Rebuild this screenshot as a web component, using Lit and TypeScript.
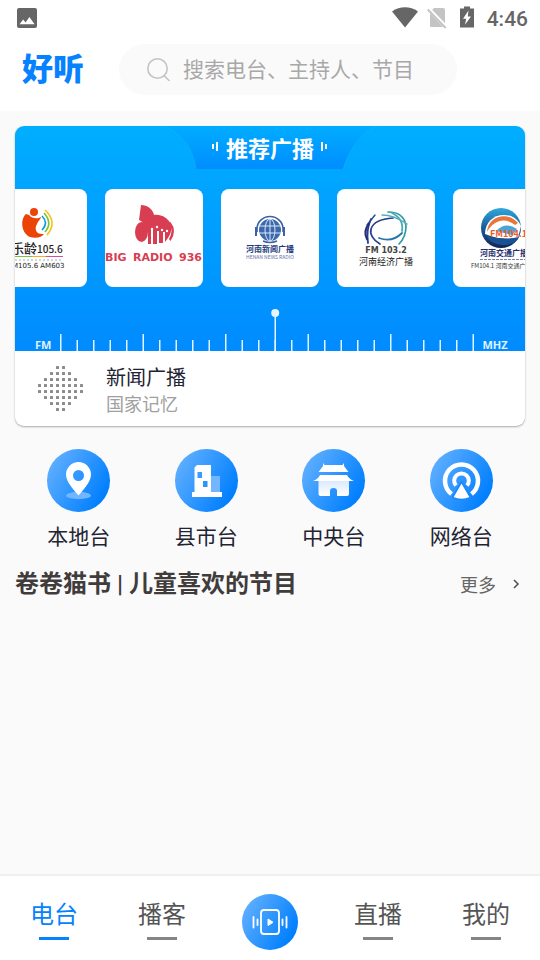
import { LitElement, html, svg, css } from "lit";
import { customElement, property, state } from "lit/decorators.js";
import { classMap } from "lit/directives/class-map.js";

const shared = css`
  *, *::before, *::after { box-sizing: border-box; }
  svg { display: block; }
  svg text { font-family: "Noto Sans CJK SC", sans-serif; }
  button, input { font: inherit; color: inherit; border: 0; padding: 0; margin: 0; background: none; }
  button { cursor: pointer; }
  a { color: inherit; text-decoration: none; }
  h1, h2, p { margin: 0; font: inherit; }
`;

@customElement("status-bar")
export class StatusBar extends LitElement {
  static styles = [shared, css`
    :host { display: flex; align-items: center; height: 36px; padding: 0 12px 0 16px; color: #666; background: #fff; }
    .right { display: flex; align-items: center; gap: 8px; margin-left: auto; }
    .time { font: 500 21px/24px Roboto, sans-serif; padding-top: 2px; }
  `];

  render() {
    return html`
      <svg width="22" height="22" viewBox="0 0 22 22" aria-hidden="true">
        <rect x="1" y="1" width="20" height="20" rx="2" fill="#666" />
        <path d="M3.5 17.3 7.2 12.6l2.4 2.9 3.8-5.4 5.2 7.2z" fill="#fff" />
      </svg>
      <div class="right">
        <svg width="28" height="24" viewBox="0 0 28 24" aria-hidden="true">
          <path d="M1 5.5C9-.1 19-.1 27 5.5L14 21.5z" fill="#666" />
        </svg>
        <svg width="20" height="24" viewBox="0 0 20 24" aria-hidden="true">
          <path d="M7 2h9q2 0 2 2v16q0 1-1 1H4q-1 0-1-1V6z" fill="#c4c4c4" />
          <path d="M1 2.500 19.500 21.500" stroke="#fff" stroke-width="4" />
          <path d="M.7 3.500 18.700 22" stroke="#c4c4c4" stroke-width="2" />
        </svg>
        <svg width="24" height="24" viewBox="0 0 24 24" aria-hidden="true">
          <path d="M9 .5h6v2h4v19H5v-19h4z" fill="#666" />
          <path d="M13.500 4.500 8 12.800h3.200l-1.200 6 6-8.400h-3.200z" fill="#fff" />
        </svg>
        <span class="time">4:46</span>
      </div>
    `;
  }
}

@customElement("search-header")
export class SearchHeader extends LitElement {
  static styles = [shared, css`
    :host { display: flex; align-items: center; gap: 35px; height: 75px; padding: 0 83px 8px 22px; background: #fff; }
    .brand { flex: none; font-weight: 900; font-size: 31px; line-height: 40px; padding-bottom: 6px; color: #0682ff; }
    .box { flex: 1; min-width: 0; height: 51px; display: flex; align-items: center; gap: 12px; padding: 0 16px 0 28px; border-radius: 26px; background: #fafafa; }
    .box svg { flex: none; }
    .field { flex: 1; min-width: 0; height: 36px; padding-bottom: 4px; outline: 0; font-size: 21px; color: #333; }
    .field::placeholder { color: #a8a8a8; opacity: 1; }
  `];

  render() {
    return html`
      <h1 class="brand">好听</h1>
      <label class="box">
        <svg width="24" height="24" viewBox="0 0 24 24" fill="none" stroke="#c4c4c4" stroke-width="1.600" stroke-linecap="round" aria-hidden="true">
          <circle cx="10.500" cy="10.500" r="9.700" /><path d="m17.500 18 4.500 4.500" />
        </svg>
        <input class="field" type="text" aria-label="搜索" placeholder="搜索电台、主持人、节目" />
      </label>
    `;
  }
}

const logos = {
  leling: svg`
    <circle cx="45" cy="23" r="4" fill="#ec4308" />
    <path d="M37 25C31 30 32 44 41 48c6 2 12 0 14-3-8 1-10-5-7-10 1-3 4-5 4-7-3 2-9 2-12-2-1 0-2-1-3-1z" fill="#ec4308" />
    <g fill="none" stroke-width="1.600">
      <path d="M53 27q7 7 0 14" stroke="#0898dc" />
      <path d="M55 24q9 10 1 19" stroke="#78c433" />
      <path d="M56 21q13 12 2 25" stroke="#f6c51d" />
    </g>
    <g font-weight="500" fill="#222"><text x="22" y="64" font-size="13">乐龄</text><text x="48" y="64" font-size="10">105.6</text></g>
    <path d="M26 67.500h17" stroke="#7bc143" /><path d="M43 67.500h14" stroke="#f5ad29" /><path d="M57 67.500h17" stroke="#cf4f9c" />
    <path d="M26 71h48" stroke="#aaa" stroke-dasharray="2 2" />
    <text class="wide" x="19" y="79" font-size="7" fill="#222">FM105.6 AM603</text>`,
  big: svg`
    <g fill="#d83d51">
      <ellipse cx="36.500" cy="43" rx="6.500" ry="10" />
      <path d="M36 16c6 0 12 4 13 10 5-1 11 1 15 6 4 6 2 13-1 17l-3 4V43h-2v11h-4V42h-2v13h-4V40h-2v15h-3V43h-2q-1-10-7-12z" />
      <path d="M64 34q5 8 0 16l1.500 2q7-10 0-19z" />
    </g>
    <g fill="#fff"><circle cx="47" cy="40" r="1.200" /><circle cx="52" cy="38" r="1.200" /><circle cx="57" cy="41" r="1.200" /><circle cx="62" cy="42" r="1.200" /></g>
    <g font-size="11" font-weight="700" fill="#d83d51">
      <text class="wide" x="0" y="72">BIG</text><text class="wide" x="28" y="72">RADIO</text><text class="wide" x="74" y="72">936</text>
    </g>`,
  news: svg`
    <circle cx="49" cy="41" r="11" fill="#3c69ad" />
    <g fill="none" stroke="#dce9f7"><ellipse cx="49" cy="41" rx="5" ry="11" /><path d="M38 37h22M38 44h22M49 30v22" /></g>
    <g fill="none" stroke="#3b60a4">
      <path d="M36 43V40a13 12.500 0 0 1 26 0v3" stroke-width="1.600" /><path d="M35 38v9M63 38v9" stroke-width="2" />
      <path d="M42 52q7 3 14 0" stroke-width="1.500" />
    </g>
    <text x="49" y="63" text-anchor="middle" font-size="8" font-weight="700" fill="#243a7c">河南新闻广播</text>
    <text x="49" y="70" text-anchor="middle" font-size="5" fill="#6473a5">HENAN NEWS RADIO</text>`,
  economy: svg`
    <g fill="none" stroke-linecap="round">
      <path d="M43 55C29 47 29 31 56 29" stroke="#253e91" stroke-width="1.700" />
      <path d="M30 36l8-10" stroke="#2f4f9c" stroke-width="1.500" />
      <path d="M34 30q-5 11-3 24" stroke="#263e94" stroke-width="1.800" />
      <path d="M32 35q-6 7-2 15" stroke="#2d2d7b" stroke-width="2.200" />
      <path d="M42 49q13 5 23-5" stroke="#2475a8" stroke-width="1.800" />
      <path d="M51 23q16 0 18 14 0 11-7 18" stroke="#2f9ba7" stroke-width="1.700" />
      <path d="M55 24q12 6 10 18" stroke="#4fabb2" stroke-width="1.800" />
      <path d="M45 26q12 0 25 9" stroke="#57adb9" stroke-width="1.500" />
    </g>
    <text class="wide" x="49" y="64" text-anchor="middle" font-size="8" font-weight="700" fill="#444">FM 103.2</text>
    <text x="49" y="76" text-anchor="middle" font-size="9" fill="#222">河南经济广播</text>`,
  traffic: svg`
    <defs><linearGradient id="globe" x2="0" y2="1"><stop stop-color="#2fa9dc" /><stop offset=".5" stop-color="#175c9b" /><stop offset="1" stop-color="#152251" /></linearGradient></defs>
    <circle cx="48" cy="39" r="20" fill="url(#globe)" />
    <path d="M32 45C32 31 44 23 58 27q7 3 10 10l-3 12q-16 3-33-4z" fill="#fff" />
    <path d="M34 43C35 27 55 22 65 34l-3 2C52 28 41 31 34 43z" fill="#e8763a" />
    <path d="M43 42q9-10 21-2l-5 6z" fill="#4ba4d5" />
    <path d="M33 46q15 6 33 2-3 8-17 8-12-1-16-10z" fill="#195393" />
    <text x="37" y="48" font-size="9" font-weight="700" fill="#ef5b2a">FM104.1</text>
    <text x="27" y="67" font-size="8" font-weight="700" fill="#252d6d">河南交通广播</text>
    <path d="M27 70.500h50" stroke="#7780ad" stroke-dasharray="3 1" />
    <text x="18" y="79" font-size="6" fill="#333">FM104.1 河南交通广播</text>`,
};

const stations = [
  { name: "乐龄105.6", art: logos.leling },
  { name: "BIG RADIO 936", art: logos.big },
  { name: "河南新闻广播", art: logos.news },
  { name: "河南经济广播", art: logos.economy },
  { name: "河南交通广播", art: logos.traffic },
];

@customElement("radio-card")
export class RadioCard extends LitElement {
  static styles = [shared, css`
    :host { display: block; border-radius: 9px; overflow: hidden; background: #fff; box-shadow: 0 1px 2px rgba(0, 0, 0, .32); }
    .tuner { display: flex; flex-direction: column; height: 225px; background: linear-gradient(#00aeff, #008bff); }
    .crest { position: relative; align-self: center; width: 214px; height: 43px; display: flex; align-items: center; justify-content: center; gap: 6px; padding-bottom: 2px; color: #fff; }
    .shape { position: absolute; inset: 0; }
    .crest h2 { position: relative; font-weight: 700; font-size: 22px; line-height: 30px; }
    .wave { position: relative; }
    .stations { display: flex; justify-content: center; gap: 18px; margin-top: 20px; overflow: hidden; }
    .station { flex: none; width: 98px; height: 98px; border-radius: 8px; overflow: hidden; background: #fff; }
    .station .wide { font-family: "DejaVu Sans", sans-serif; }
    .dial { display: flex; justify-content: center; align-items: flex-end; gap: 8px; margin-top: auto; color: #e0f1ff; }
    .dial svg { flex: none; }
    .dial span { font: 700 11px/12px "Noto Sans", sans-serif; }
    .low { width: 20px; text-align: right; }
    .high { width: 26px; }
    .now { display: flex; align-items: center; gap: 22px; width: 100%; height: 75px; padding: 0 22px; text-align: left; }
    .name, .show { display: block; }
    .name { font-size: 20px; line-height: 28px; color: #1f2433; }
    .show { font-size: 18px; line-height: 24px; color: #a0a0a0; }
  `];

  private ticks() {
    return Array.from({ length: 26 }, (_, i) => svg`
      <rect x=${i * 16.5} y=${i % 5 ? 32 : 26} width="1.500" height="18" />`);
  }

  private dots() {
    return [2, 4, 6, 8, 8, 6, 4, 2].flatMap((count, row) =>
      Array.from({ length: count }, (_, i) => svg`
        <rect x=${1 + (4 - count / 2 + i) * 6} y=${1 + row * 6} width="3" height="3" rx=".5" />`));
  }

  render() {
    return html`
      <div class="tuner">
        <div class="crest">
          <svg class="shape" width="214" height="43" viewBox="0 0 214 43" aria-hidden="true">
            <defs><linearGradient id="crest" x2="0" y2="1"><stop stop-color="#00adff" /><stop offset="1" stop-color="#008dff" /></linearGradient></defs>
            <path d="M0 0Q28 10 33 43H180Q190 11 214 0z" fill="url(#crest)" />
            <path d="M0 0Q28 10 33 43M180 43Q190 11 214 0" fill="none" stroke="#08bcff" stroke-opacity=".5" />
          </svg>
          <svg class="wave" width="8" height="12" viewBox="0 0 8 12" fill="#fff" aria-hidden="true"><rect y="3" width="2" height="5" /><rect x="4" y="1" width="2" height="9" /></svg>
          <h2>推荐广播</h2>
          <svg class="wave" width="8" height="12" viewBox="0 0 8 12" fill="#fff" aria-hidden="true"><rect x="1" y="1" width="2" height="9" /><rect x="5" y="3" width="2" height="5" /></svg>
        </div>
        <div class="stations">
          ${stations.map((s) => html`
            <a class="station" href="#station" aria-label=${s.name}>
              <svg width="98" height="98" viewBox="0 0 98 98">${s.art}</svg>
            </a>`)}
        </div>
        <div class="dial">
          <span class="low">FM</span>
          <svg width="415" height="43" viewBox="0 0 415 43" fill="#e6f4ff" aria-hidden="true">
            ${this.ticks()}
            <rect x="214.500" y="5" width="1.500" height="38" /><circle cx="215.200" cy="5" r="4" />
          </svg>
          <span class="high">MHZ</span>
        </div>
      </div>
      <button class="now" type="button">
        <svg width="47" height="47" viewBox="0 0 47 47" fill="#8d8d8d" aria-hidden="true">${this.dots()}</svg>
        <span>
          <span class="name">新闻广播</span>
          <span class="show">国家记忆</span>
        </span>
      </button>
    `;
  }
}

const categories = [
  {
    label: "本地台",
    art: svg`
      <ellipse cx="31.500" cy="46.500" rx="12.500" ry="3.700" fill="#71b6ff" />
      <path fill-rule="evenodd" fill="#fff" d="M31.500 46.500C28 42 19 33.500 19 25.500a12.500 12.500 0 0 1 25 0C44 33.500 35 42 31.500 46.500zM31.500 21a5.500 5.500 0 1 0 0 11 5.500 5.500 0 0 0 0-11z" />`,
  },
  {
    label: "县市台",
    art: svg`
      <path d="M36 27h9v17h-9z" fill="#71b6ff" />
      <path fill-rule="evenodd" fill="#fff" d="M22 16h14v27h11v5H17v-5h2.500V18.500zM22.500 23v6H27v-6zM28 32v6h4.500v-6z" />`,
  },
  {
    label: "中央台",
    art: svg`
      <defs><linearGradient id="hall" x2="0" y2="1"><stop stop-color="#d8e9ff" /><stop offset="1" stop-color="#fff" /></linearGradient></defs>
      <path d="M16.500 31H47v14q0 2-2 2H35v-5q0-3-3.500-3T28 42v5h-9.500q-2 0-2-2z" fill="url(#hall)" />
      <path fill="#fff" d="M21 14l1.500 2h18l1.500-2v3l4.500 6h-30L21 17zM18 26h27q2 4 7 6H11q5-2 7-6z" />`,
  },
  {
    label: "网络台",
    art: svg`
      <g fill="none" stroke="#fff">
        <path d="M21.500 45a16.500 16.500 0 1 1 20 0" stroke-width="4.500" />
        <path d="M26 36.500a7.300 7.300 0 1 1 11 0" stroke-width="4" />
      </g>
      <path d="M31.500 33 40.500 48.500q-9 4-18 0z" fill="#fff" stroke="#1988ff" stroke-width="1.500" />`,
  },
];

@customElement("category-grid")
export class CategoryGrid extends LitElement {
  static styles = [shared, css`
    :host { display: block; }
    .grid { display: grid; grid-template-columns: repeat(4, 1fr); }
    .item { display: flex; flex-direction: column; align-items: center; gap: 7px; font-size: 21px; line-height: 32px; color: #1f2433; }
    .disc { border-radius: 50%; background: linear-gradient(120deg, #66b2ff 5%, #007fff 85%); }
  `];

  render() {
    return html`
      <nav class="grid">
        ${categories.map((c) => html`
          <a class="item" href="#category">
            <svg class="disc" width="63" height="63" viewBox="0 0 63 63" aria-hidden="true">${c.art}</svg>
            <span>${c.label}</span>
          </a>`)}
      </nav>
    `;
  }
}

@customElement("section-heading")
export class SectionHeading extends LitElement {
  @property() heading = "";

  static styles = [shared, css`
    :host { display: flex; align-items: center; justify-content: space-between; height: 36px; }
    .title { font: 700 24px/36px Roboto, "Noto Sans CJK SC", sans-serif; color: #403c3c; }
    .more { display: flex; align-items: center; gap: 16px; font-size: 18px; line-height: 28px; color: #666; }
  `];

  render() {
    return html`
      <h2 class="title">${this.heading}</h2>
      <a class="more" href="#more">更多
        <svg width="13" height="12" viewBox="0 0 13 12" fill="none" stroke="#555" stroke-width="1.600" aria-hidden="true"><path d="m2 2 4 4-4 4" /></svg>
      </a>
    `;
  }
}

@customElement("tab-bar")
export class TabBar extends LitElement {
  @state() private current = "电台";

  static styles = [shared, css`
    :host { display: block; border-top: 2px solid #f0f0f0; background: #fff; }
    .tabs { display: grid; grid-template-columns: repeat(5, 1fr); height: 84px; padding-top: 18px; align-items: start; justify-items: center; }
    .tab { display: flex; flex-direction: column; align-items: center; gap: 5px; font-size: 24px; line-height: 38px; color: #555; }
    .tab::after { content: ""; width: 30px; height: 3px; background: #858585; }
    .tab.active { color: #0682ff; }
    .tab.active::after { background: #0682ff; }
    .play { width: 56px; height: 56px; border-radius: 50%; background: linear-gradient(120deg, #66b2ff 5%, #007fff 85%); }
  `];

  private tab(label: string) {
    return html`<button type="button" class=${classMap({ tab: true, active: this.current === label })}
      @click=${() => (this.current = label)}>${label}</button>`;
  }

  render() {
    return html`
      <nav class="tabs">
        ${this.tab("电台")}
        ${this.tab("播客")}
        <button class="play" type="button" aria-label="播放">
          <svg width="56" height="56" viewBox="0 0 56 56" fill="none" stroke="#fff" aria-hidden="true">
            <rect x="19" y="16" width="18" height="24" rx="3" stroke-width="1.800" />
            <path d="M26 25v6.500l5-3.200z" fill="#fff" />
            <path d="M11.500 23v10.500M15.500 25.500v5.500M40.500 25.500v5.500M44.500 23v10.500" stroke-width="1.800" stroke-linecap="round" />
          </svg>
        </button>
        ${this.tab("直播")}
        ${this.tab("我的")}
      </nav>
    `;
  }
}

@customElement("app-root")
export class AppRoot extends LitElement {
  static styles = [shared, css`
    :host { display: flex; flex-direction: column; min-height: 100vh; background: #fafafa; font-family: "Noto Sans CJK SC", sans-serif; }
    .content { flex: 1; display: flex; flex-direction: column; padding: 15px; }
    .categories { margin-top: 23px; }
    .section { margin-top: 15px; }
  `];

  render() {
    return html`
      <status-bar></status-bar>
      <search-header></search-header>
      <main class="content">
        <radio-card></radio-card>
        <category-grid class="categories"></category-grid>
        <section-heading class="section" heading="卷卷猫书 | 儿童喜欢的节目"></section-heading>
      </main>
      <tab-bar></tab-bar>
    `;
  }
}
